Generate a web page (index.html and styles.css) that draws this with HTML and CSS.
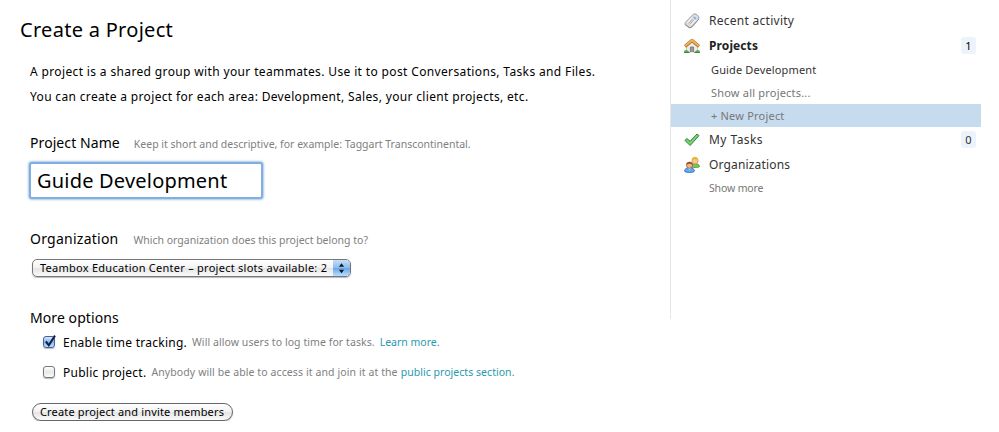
FILE: index.html
```html
<!DOCTYPE html>
<html lang="en">
<head>
<meta charset="utf-8">
<title>Create a Project</title>
<link rel="stylesheet" href="styles.css">
</head>
<body>
<div class="page">
  <main class="main">
    <h1 class="title">Create a Project</h1>
    <form class="form">
      <p class="intro intro-first">A project is a shared group with your teammates. Use it to post Conversations, Tasks and Files.</p>
      <p class="intro intro-second">You can create a project for each area: Development, Sales, your client projects, etc.</p>
      <div class="heading heading-name"><label class="label" for="name">Project Name</label><span class="hint hint-name">Keep it short and descriptive, for example: Taggart Transcontinental.</span></div>
      <input class="name-input" id="name" type="text" value="Guide Development">
      <div class="heading heading-org"><span class="label label-org">Organization</span><span class="hint hint-org">Which organization does this project belong to?</span></div>
      <div class="select" role="listbox">
        <span class="select-text">Teambox Education Center – project slots available: 2</span>
        <span class="select-arrows"><svg width="18" height="17" viewBox="0 0 18 17"><path d="M5.9 6.7 8.5 3.2l2.6 3.5zM5.9 9.8l2.6 3.5 2.6-3.5z" fill="#101820"/></svg></span>
      </div>
      <div class="heading heading-more"><span class="label label-more">More options</span></div>
      <div class="option">
        <span class="check checked"><svg width="16" height="16" viewBox="0 0 16 16"><path d="M3.8 7.5 6.8 11.2 13 1.6" fill="none" stroke="#15203c" stroke-width="2"/></svg></span>
        <span class="option-name name-track">Enable time tracking.</span><span class="hint hint-track">Will allow users to log time for tasks.</span><a class="link link-more">Learn more.</a>
      </div>
      <div class="option option-public">
        <span class="check"></span>
        <span class="option-name name-public">Public project.</span><span class="hint hint-public">Anybody will be able to access it and join it at the</span><a class="link link-public">public projects section</a><span class="hint">.</span>
      </div>
      <button class="submit" type="button">Create project and invite members</button>
    </form>
  </main>
  <nav class="sidebar">
    <div class="item">
      <svg class="icon" width="16" height="16" viewBox="0 0 16 16"><path d="M9.3 1.2 12 .9l2.9 3-.3 2.4-7.2 8.2-2.2.2L1 11.6l.2-2z" fill="#dcdcdc" stroke="#a2a2a2" stroke-linejoin="round"/><path d="m1.4 11.5 4 3.1 1.9-.2 7.4-8.2" fill="none" stroke="#8c8c8c"/><path d="m3.6 9.4 4.2-4.7M6.8 12.2l4.4-5" stroke="#fff"/><path d="m4.6 10.4 4-4.6M6 11.2l3.6-4.1" stroke="#a8a8a8" stroke-width=".8"/><path d="m10.3 2.9 2.8 2.3-1.6 1.9-2.8-2.3z" fill="#74b2f0" stroke="#eef6ff" stroke-width=".6"/></svg>
      <span class="item-name recent">Recent activity</span>
    </div>
    <div class="item">
      <svg class="icon" width="16" height="16" viewBox="0 0 16 16"><path d="M2.5 8 8 3.5 13.5 8v6h-11z" fill="#eee" stroke="#b2b2b2" stroke-width=".7"/><path d="M6.4 14V9h3.2v5" fill="#999" stroke="#727272" stroke-width=".8"/><path d="M1 8.5 8 2.5l7 6" fill="none" stroke="#b5711f" stroke-width="3.4" stroke-linejoin="round"/><path d="M1.2 8 8 2.2 14.8 8" fill="none" stroke="#edb363" stroke-width="2"/><path d="M0 14.2c0-3 4-3 5 0zM11 14.2c.7-3 5-3 5 0z" fill="#55b14b"/><path d="M0 14.5h5.5M10.5 14.5H16" stroke="#39853a"/></svg>
      <span class="item-name projects">Projects</span><span class="badge badge-on">1</span>
    </div>
    <div class="sub sub-guide"><span class="guide">Guide Development</span></div>
    <div class="sub sub-all"><span class="all">Show all projects...</span></div>
    <div class="sub sub-new"><span class="new">+ New Project</span></div>
    <div class="item item-tasks">
      <svg class="icon" width="16" height="16" viewBox="0 0 16 16"><path d="M.8 8.4 3 6.5l3 2.7 7-7.2 2 1.6L6.2 13.5z" fill="#6bc568" stroke="#389044" stroke-linejoin="round"/><path d="m2.4 8.2 3.7 3.2 7.3-8" fill="none" stroke="#93de8b" stroke-width=".8"/></svg>
      <span class="item-name tasks">My Tasks</span><span class="badge">0</span>
    </div>
    <div class="item">
      <svg class="icon" width="16" height="16" viewBox="0 0 16 16"><path d="M6.8 9.6c0-4 8.7-4 8.7 0-.5 1.2-8.2 1.2-8.7 0z" fill="#75c957" stroke="#3f913a" stroke-width=".8"/><circle cx="11" cy="3.9" r="3.1" fill="#f6c69a" stroke="#d09428" stroke-width=".7"/><path d="M7.7 3.6c0-5 6.6-5 6.6 0-1.5-1.9-4.8-1.9-6.6 0z" fill="#e8b12e"/><path d="M.5 14c0-4.5 10-4.5 10 0-.5 2-9.5 2-10 0z" fill="#61a9ef" stroke="#2c66bb" stroke-width=".8"/><path d="m4 11.2 1.5 1.6L7 11.2z" fill="#fff"/><circle cx="5.5" cy="8.3" r="3" fill="#edb78b" stroke="#8a4c25" stroke-width=".7"/><path d="M2.2 7.9c.1-4.3 6.6-4.3 6.6 0-1.5-1.6-4.9-1.6-6.6 0z" fill="#974c20"/></svg>
      <span class="item-name orgs">Organizations</span>
    </div>
    <div class="sub sub-more"><span class="more">Show more</span></div>
  </nav>
</div>
</body>
</html>
```
FILE: styles.css
```css
* { box-sizing: border-box; }
body { margin: 0; background: #fff; color: #000; font-family: "Noto Sans", "Open Sans", sans-serif; }
.page { display: flex; align-items: flex-start; width: 981px; }
.main { width: 670px; flex: none; }
.title { margin: 15px 0 0 20px; font-size: 20px; line-height: 30px; font-weight: 400; letter-spacing: .29px; white-space: nowrap; }
.form { padding-left: 30px; white-space: nowrap; }
.intro { margin: 0; font-size: 12px; line-height: 25px; letter-spacing: .36px; }
.intro-first { margin-top: 14px; }
.intro-second { letter-spacing: .34px; }
.heading { display: flex; align-items: baseline; height: 24px; line-height: 24px; }
.heading-name { margin-top: 22px; }
.label { font-size: 14px; letter-spacing: .08px; }
.label-org { letter-spacing: .25px; }
.hint { font-size: 10.5px; color: #808080; }
.hint-name { margin-left: 14px; }
.hint-org { margin-left: 15px; }
.name-input { display: block; width: 234px; height: 37px; margin: 7px 0 0 -1px; padding: 0 6px; border: 2px solid #84aede; border-radius: 3px; outline: 0; box-shadow: 0 0 2px 1px #a9c8ec; font: 20px "Noto Sans", sans-serif; letter-spacing: .2px; color: #000; }
.heading-org { margin-top: 28px; }
.select { display: flex; width: 319px; height: 18px; margin: 8px 0 0 2px; border: 1px solid #777; border-radius: 5px; background: linear-gradient(#fff, #f3f3f3 48%, #e5e5e5 52%, #fafafa); box-shadow: 0 1px 1px #bbb; overflow: hidden; font-size: 11px; line-height: 16px; letter-spacing: .26px; }
.select-text { width: 300px; padding-left: 7px; }
.select-arrows { width: 17px; height: 16px; background: linear-gradient(#c7def8, #8dbaf0 48%, #69a5e8 52%, #b5e0ff); }
.select-arrows svg, .check svg { display: block; }
.heading-more { margin-top: 29px; }
.option { display: flex; align-items: center; height: 24px; padding-left: 13px; }
.option-public { margin-top: 6px; }
.check { width: 12px; height: 12px; margin-right: 8px; border: 1px solid #777; border-radius: 3px; background: linear-gradient(#fff, #e8e8e8 50%, #fafafa); box-shadow: 0 1px 1px #bbb; }
.checked { border-color: #4b5ba3; background: linear-gradient(#d7e9fc, #81b7ee 50%, #b6e2ff); }
.checked svg { margin: -3px 0 0 -2px; }
.option-name { font-size: 12px; letter-spacing: .25px; }
.hint-track, .hint-public { margin-left: 5px; }
.hint-track { letter-spacing: .07px; }
.hint-public { letter-spacing: .1px; }
.link { font-size: 10.5px; color: #2799ad; margin-left: 5px; }
.link-public { margin-left: 3px; letter-spacing: .04px; }
.submit { display: block; width: 201px; height: 18px; margin: 19px 0 0 2px; padding: 0 0 1px 7px; border: 1px solid #666; border-radius: 9px; background: linear-gradient(#fff, #f2f2f2 48%, #e5e5e5 52%, #fafafa); box-shadow: 0 1px 1px #bbb; font: 11px/15px "Noto Sans", sans-serif; letter-spacing: .16px; text-align: left; color: #000; }
.sidebar { width: 311px; height: 319px; padding-top: 8px; border-left: 1px solid #e6e6e6; color: #333; white-space: nowrap; }
.item { display: flex; align-items: center; height: 25px; padding: 0 5px 0 13px; font-size: 12px; }
.icon { flex: none; margin-right: 9px; }
.recent { letter-spacing: .27px; }
.projects { font-weight: 700; color: #222; letter-spacing: .1px; }
.tasks { letter-spacing: .45px; }
.orgs { letter-spacing: .16px; }
.badge { width: 15px; height: 17px; margin-left: auto; border-radius: 3px; background: #ecf3fa; font-size: 11px; line-height: 17px; text-align: center; }
.badge-on { color: #000; }
.sub { height: 23px; line-height: 23px; padding-left: 40px; font-size: 11px; color: #777; }
.sub-guide { color: #333; letter-spacing: .15px; }
.sub-all { letter-spacing: .2px; }
.sub-new { background: #c7dbef; letter-spacing: .2px; }
.sub-more { padding-left: 38px; font-size: 10.5px; letter-spacing: -.15px; }
```
